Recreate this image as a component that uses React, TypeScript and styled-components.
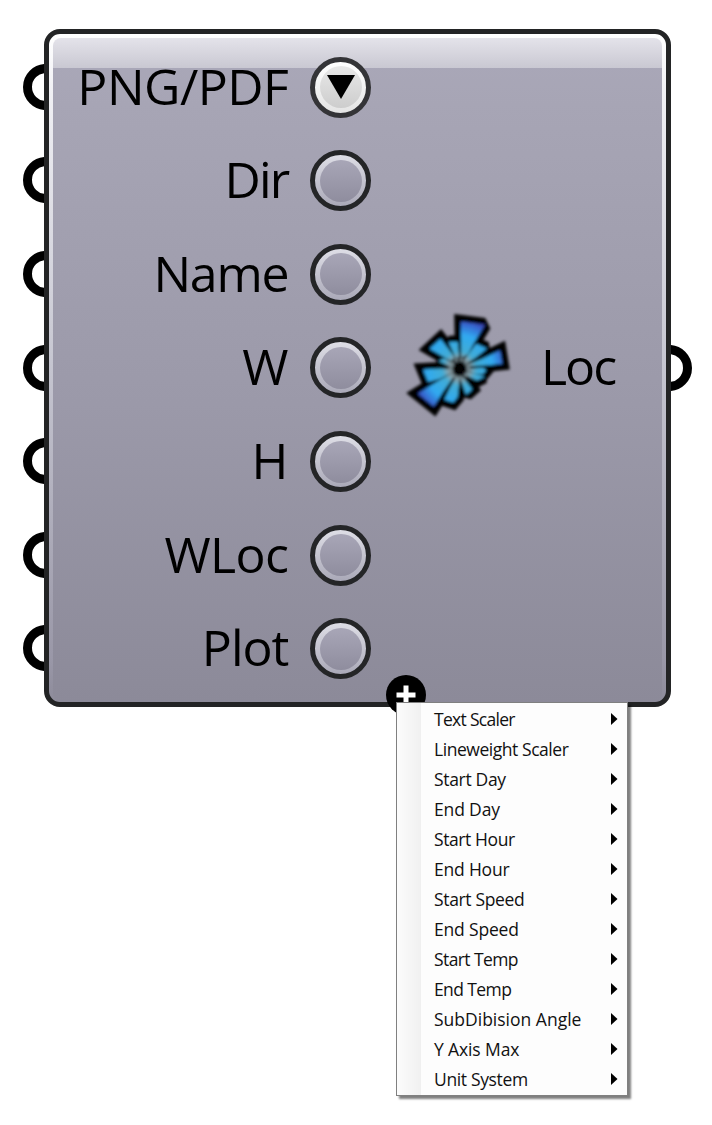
import React from "react";
import styled, { createGlobalStyle } from "styled-components";

const GlobalStyle = createGlobalStyle`
  * { box-sizing: border-box; }
  body { margin: 0; background: #fff; font-family: "Open Sans", "Noto Sans", sans-serif; color: #000; }
`;

const Canvas = styled.main`
  position: relative;
  width: 712px;
  height: 1125px;
  padding: 29px 20px 0 23px;
  overflow: hidden;
`;

const Node = styled.div`
  display: flex;
  height: 678px;
`;

const Ports = styled.div`
  width: 21px;
  padding-top: 11px;
`;

const PortSlot = styled.div<{ $side: "left" | "right" }>`
  display: flex;
  justify-content: ${(p) => (p.$side === "left" ? "flex-start" : "flex-end")};
  align-items: center;
  height: 93.6px;
  overflow: hidden;
`;

const Port = styled.span`
  flex: none;
  width: 46px;
  height: 46px;
  border: 9px solid #000;
  border-radius: 50%;
  background: #fff;
`;

const Body = styled.section`
  display: flex;
  width: 627px;
  border: 5px solid #232425;
  border-radius: 16px;
  background: linear-gradient(#fff, #f1f1f5 8%, #c5c5d0 50%, #9997a7 94%, #8d8b9a);
  padding: 4px 4px 0;
`;

const Face = styled.div`
  display: flex;
  flex: 1;
  border-radius: 8px 8px 9px 9px;
  background:
    linear-gradient(#e4e3ea, #c9c8d2) top / 100% 30px no-repeat,
    linear-gradient(#aaa8b9, #a7a5b5 10%, #9b99a9 55%, #8c8a99);
  padding-top: 2.4px;
`;

const Inputs = styled.div`
  width: 318px;
`;

const InputRow = styled.div`
  display: flex;
  align-items: center;
  justify-content: flex-end;
  gap: 21px;
  height: 93.6px;
`;

const Label = styled.span<{ $spacing?: number }>`
  font-size: 50px;
  line-height: 60px;
  white-space: nowrap;
  letter-spacing: ${(p) => p.$spacing ?? 0}px;
  padding: 0 0.6px 3px 0;
`;

const Knob = styled.span<{ $light?: boolean }>`
  display: grid;
  place-items: center;
  flex: none;
  width: 61px;
  height: 61px;
  border: 5px solid ${(p) => (p.$light ? "#343437" : "#242527")};
  border-radius: 50%;
  background: ${(p) => (p.$light ? "linear-gradient(#fff, #e4e4e4)" : "linear-gradient(#dedee6, #aaa9b8)")};
`;

const KnobFace = styled.span<{ $light?: boolean }>`
  display: grid;
  place-items: center;
  width: 42px;
  height: 42px;
  border-radius: 50%;
  background: ${(p) => (p.$light ? "linear-gradient(#e8e8e8, #cdcdcd)" : "linear-gradient(#a8a6b7, #8f8d9e)")};
`;

const Output = styled.div`
  display: flex;
  align-items: center;
  gap: 16px;
  height: 93.6px;
  margin: 280.8px 0 0 24px;
`;

const PortGap = styled.div`
  height: 280.8px;
`;

const AddButton = styled.div`
  position: absolute;
  left: 386px;
  top: 675px;
  display: grid;
  place-items: center;
  width: 40px;
  height: 40px;
  border-radius: 50%;
  background: #000;
`;

const Menu = styled.ul`
  position: absolute;
  left: 396px;
  top: 702px;
  width: 232px;
  height: 394px;
  margin: 0;
  padding: 1px 0 0;
  list-style: none;
  border: 1px solid #808080;
  background: linear-gradient(90deg, #fcfcfc, #f0f0f0 24px, #fdfdfd 24px);
  box-shadow: 3px 3px 2px rgba(0, 0, 0, 0.5);
`;

const MenuItem = styled.li<{ $spacing: number }>`
  display: flex;
  align-items: center;
  justify-content: space-between;
  height: 30px;
  padding: 0 9px 0 37px;
  font-size: 17.5px;
  line-height: 30px;
  color: #111;
  white-space: nowrap;
  letter-spacing: ${(p) => p.$spacing}px;
`;

const RoseIcon = styled.svg`
  flex: none;
  margin-bottom: 5px;
`;

const inputs: { label: string; spacing: number; open?: boolean }[] = [
  { label: "PNG/PDF", spacing: -0.5, open: true },
  { label: "Dir", spacing: -1.8 },
  { label: "Name", spacing: -1.2 },
  { label: "W", spacing: 0 },
  { label: "H", spacing: 0 },
  { label: "WLoc", spacing: -0.6 },
  { label: "Plot", spacing: -1 },
];

const menu: [string, number][] = [
  ["Text Scaler", -0.7],
  ["Lineweight Scaler", -0.45],
  ["Start Day", -0.32],
  ["End Day", -0.15],
  ["Start Hour", -0.4],
  ["End Hour", -0.2],
  ["Start Speed", -0.35],
  ["End Speed", -0.18],
  ["Start Temp", -0.6],
  ["End Temp", -0.6],
  ["SubDibision Angle", 0],
  ["Y Axis Max", -0.12],
  ["Unit System", -0.35],
];

const petals = [
  "199,66 268,75 236,128 218,162 200,172 200,120",
  "163,128 187,127 191,170 183,174",
  "106,146 136,118 178,172 168,182",
  "134,183 148,176 176,194 172,202",
  "86,210 134,207 172,208 172,216 132,236 100,244",
  "70,281 132,243 172,220 178,226 142,276 116,318",
  "150,298 166,264 185,230 193,232 186,292 174,306",
  "198,238 205,234 230,268 214,282",
  "212,224 218,217 266,230 246,240",
  "216,208 264,205 272,210 262,222 236,219",
  "213,197 262,178 314,153 320,190 270,195",
  "207,182 244,133 273,146 244,170 212,191",
];

function WindRose() {
  return (
    <RoseIcon width="130" height="130" viewBox="0 0 390 390">
      <defs>
        <radialGradient id="rose" gradientUnits="userSpaceOnUse" cx="193" cy="206" r="155">
          <stop offset="0.1" stopColor="#727d80" />
          <stop offset="0.22" stopColor="#86a4ae" />
          <stop offset="0.34" stopColor="#41acd6" />
          <stop offset="0.65" stopColor="#2fa9f0" />
          <stop offset="0.87" stopColor="#3764cf" />
          <stop offset="1" stopColor="#37309c" />
        </radialGradient>
        <filter id="soft" x="-25%" y="-25%" width="150%" height="150%">
          <feGaussianBlur stdDeviation="4.5" />
        </filter>
      </defs>
      <g filter="url(#soft)">
        {petals.map((p) => (
          <polygon key={p} points={p} stroke="#000" strokeWidth="42" strokeLinejoin="miter" strokeMiterlimit="1.75" />
        ))}
        {petals.map((p) => (
          <polygon key={p} points={p} fill="url(#rose)" stroke="url(#rose)" strokeWidth="3" />
        ))}
        <circle cx="193" cy="206" r="27" fill="none" stroke="#73858c" strokeWidth="10" strokeDasharray="10 6" />
        <circle cx="193" cy="206" r="16" />
      </g>
    </RoseIcon>
  );
}

export default function App() {
  return (
    <>
      <GlobalStyle />
      <Canvas>
        <Node>
          <Ports>
            {inputs.map((i) => (
              <PortSlot key={i.label} $side="left">
                <Port />
              </PortSlot>
            ))}
          </Ports>
          <Body>
            <Face>
              <Inputs>
                {inputs.map((i) => (
                  <InputRow key={i.label}>
                    <Label $spacing={i.spacing}>{i.label}</Label>
                    <Knob $light={i.open}>
                      <KnobFace $light={i.open}>
                        {i.open && (
                          <svg width="28" height="24" viewBox="0 0 28 24">
                            <path d="M0 0H28L14 24Z" />
                          </svg>
                        )}
                      </KnobFace>
                    </Knob>
                  </InputRow>
                ))}
              </Inputs>
              <Output>
                <WindRose />
                <Label $spacing={-2}>Loc</Label>
              </Output>
            </Face>
          </Body>
          <Ports>
            <PortGap />
            <PortSlot $side="right">
              <Port />
            </PortSlot>
          </Ports>
        </Node>
        <AddButton>
          <svg width="20" height="20" viewBox="0 0 20 20">
            <path d="M7.5 0.5h5v7h7v5h-7v7h-5v-7h-7v-5h7Z" fill="#fff" />
          </svg>
        </AddButton>
        <Menu>
          {menu.map(([label, spacing]) => (
            <MenuItem key={label} $spacing={spacing}>
              {label}
              <svg width="7" height="12" viewBox="0 0 7 12">
                <path d="M0 0L6.5 6L0 12Z" />
              </svg>
            </MenuItem>
          ))}
        </Menu>
      </Canvas>
    </>
  );
}
